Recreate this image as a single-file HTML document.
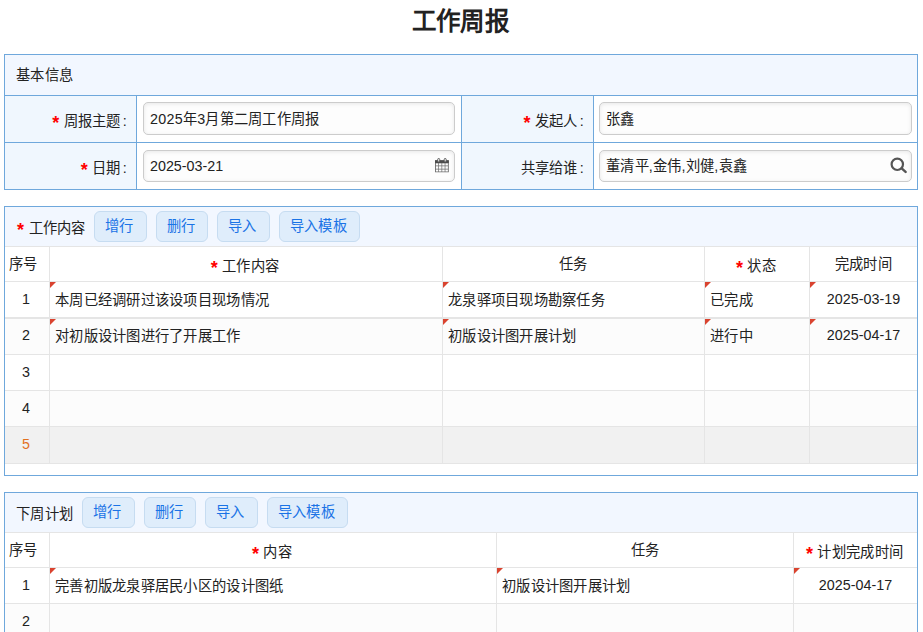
<!DOCTYPE html>
<html lang="zh-CN">
<head>
<meta charset="utf-8">
<title>工作周报</title>
<style>
*{box-sizing:border-box;}
html,body{margin:0;padding:0;}
html{width:923px;height:632px;overflow:hidden;background:#fff;}
body{width:923px;height:632px;overflow:hidden;background:#fff;color:#222;
  font-family:"Liberation Sans",sans-serif;font-size:14.3px;line-height:20px;letter-spacing:.27px;}
h1{margin:0;height:54px;text-align:center;font-size:24.5px;font-weight:bold;line-height:32px;padding:6px 2px 0 0;color:#222;}
.star{color:#f00;font-size:18px;font-weight:bold;line-height:0;vertical-align:-3px;}
/* ---------- panel 1 ---------- */
.p1{margin-left:4px;width:914px;padding:1px;background:#6fa8dc;display:grid;gap:1px;
  grid-template-columns:131px 324px 131px 323px;grid-template-rows:40px 46px 46px;}
.p1 > div{background:#fff;}
.p1 .cap{grid-column:1 / 5;background:#f2f7ff;padding:10px 0 0 11px;}
.p1 .lab{background:#f0f7fe;text-align:right;padding:15px 9px 0 0;white-space:nowrap;}
.p1 .lab i{font-style:normal;margin-left:2px;}
.p1 .fld{padding:6px 0 0 6px;}
.inp{position:relative;width:312px;height:33px;border:1px solid #ccc;border-radius:5px;background:#fdfdfd;
  box-shadow:inset 0 1px 4px rgba(0,0,0,.09);padding:6px 0 0 6px;white-space:nowrap;}
.inp svg{position:absolute;}
.p1 .fld.r{padding-left:5px;}
.p1 .fld.r .inp{width:313px;}
.p1 .fld.b{padding-top:7px;}
.p1 .fld.b .inp{height:32px;padding-top:5px;}
/* ---------- panels 2 / 3 ---------- */
.pn{margin:16px 0 0 4px;width:914px;border:1px solid #6fa8dc;background:#fff;}
.tb{height:39px;background:#f2f7ff;position:relative;}
.tb .ttl{position:absolute;left:11px;top:11px;white-space:nowrap;}
.btn{position:absolute;top:4px;height:31px;border:1px solid #c6dcf1;border-radius:6px;background:#dfedfb;
  color:#1a73e6;text-align:center;line-height:20px;padding:4px 2px 0 0;white-space:nowrap;}
.gr{display:grid;gap:1px;background:#e5e5e5;border-top:1px solid #e5e5e5;border-bottom:1px solid #e5e5e5;}
.gr > div{background:#fff;position:relative;white-space:nowrap;overflow:hidden;}
.g2{grid-template-columns:44px 392px 261px 104px 107px;grid-template-rows:34px 35px 36px 35px 35px 36px;}
.g3{grid-template-columns:44px 446px 296px 123px;grid-template-rows:34px 35px 28px;border-bottom:0;}
.pn.last{border-bottom:0;height:140px;overflow:hidden;}
.gr .h{text-align:center;padding-top:7px;}
.gr .h.s{padding:9px 2px 0 0;}
.gr .h.f{padding-right:7px;}
.gr .n{text-align:center;padding:7px 2px 0 0;}
.gr .c{padding:8px 0 0 5px;}
.gr .d{text-align:center;padding-top:7px;letter-spacing:.05px;}
.ls0{letter-spacing:0;}
.gr .alt{background:#fcfcfc;}
.g2 > div:nth-child(n+11):nth-child(-n+15){border-top:1px solid #e5e5e5;padding-top:7px;}
.g2 > div.n:nth-child(11),.g2 > div.d:nth-child(15){padding-top:6px;}
.gr .sel{background:#f1f1f1;}
.gr .n.sel{color:#e2701e;}
.gr .m:before{content:"";position:absolute;left:0;top:0;border-top:6px solid #d9432f;border-right:6px solid transparent;}
</style>
</head>
<body>
<h1>工作周报</h1>

<div class="p1">
  <div class="cap">基本信息</div>
  <div class="lab"><span class="star">*</span> 周报主题<i>:</i></div>
  <div class="fld"><div class="inp">2025年3月第二周工作周报</div></div>
  <div class="lab"><span class="star">*</span> 发起人<i>:</i></div>
  <div class="fld r"><div class="inp">张鑫</div></div>
  <div class="lab"><span class="star">*</span> 日期<i>:</i></div>
  <div class="fld b"><div class="inp ls0">2025-03-21<svg width="14" height="15" viewBox="0 0 14 15" style="left:291px;top:6.8px"><path fill="#6e6e6e" fill-rule="evenodd" d="M0 2.3h13.8v11.9H0zM0.9 5.2V7.6H3.3V5.2zM4 5.2V7.6H6.5V5.2zM7.2 5.2V7.6H9.7V5.2zM10.4 5.2V7.6H12.9V5.2zM0.9 8.3V10.7H3.3V8.3zM4 8.3V10.7H6.5V8.3zM7.2 8.3V10.7H9.7V8.3zM10.4 8.3V10.7H12.9V8.3zM0.9 11.4V13.5H3.3V11.4zM4 11.4V13.5H6.5V11.4zM7.2 11.4V13.5H9.7V11.4zM10.4 11.4V13.5H12.9V11.4z"/><rect x="0" y="2.3" width="13.8" height="2.8" fill="#4c4c4c"/><rect x="2.7" y="0.45" width="2" height="3.5" rx="1" fill="#eee" stroke="#555" stroke-width="0.9"/><rect x="9.2" y="0.45" width="2" height="3.5" rx="1" fill="#eee" stroke="#555" stroke-width="0.9"/></svg></div></div>
  <div class="lab">共享给谁<i>:</i></div>
  <div class="fld r b"><div class="inp">董清平,金伟,刘健,袁鑫<svg width="18" height="18" viewBox="0 0 18 18" style="left:289px;top:5.2px"><circle cx="8.3" cy="8.3" r="5.7" fill="none" stroke="#555" stroke-width="2.2"/><path d="M12.7 12.4l3.9 3.5" stroke="#555" stroke-width="2.4" stroke-linecap="round" fill="none"/></svg></div></div>
</div>

<div class="pn">
  <div class="tb">
    <div class="ttl" style="left:12px"><span class="star">*</span> 工作内容</div>
    <div class="btn" style="left:89px;width:53px;">增行</div>
    <div class="btn" style="left:151px;width:52px;">删行</div>
    <div class="btn" style="left:212px;width:53px;">导入</div>
    <div class="btn" style="left:274px;width:81px;">导入模板</div>
  </div>
  <div class="gr g2">
    <div class="h f">序号</div>
    <div class="h s"><span class="star">*</span> 工作内容</div>
    <div class="h">任务</div>
    <div class="h s"><span class="star">*</span> 状态</div>
    <div class="h">完成时间</div>

    <div class="n">1</div>
    <div class="c m">本周已经调研过该设项目现场情况</div>
    <div class="c m">龙泉驿项目现场勘察任务</div>
    <div class="c m">已完成</div>
    <div class="d m">2025-03-19</div>

    <div class="n alt">2</div>
    <div class="c m alt">对初版设计图进行了开展工作</div>
    <div class="c m alt">初版设计图开展计划</div>
    <div class="c m alt">进行中</div>
    <div class="d m alt">2025-04-17</div>

    <div class="n">3</div><div class="c"></div><div class="c"></div><div class="c"></div><div class="d"></div>
    <div class="n alt">4</div><div class="c alt"></div><div class="c alt"></div><div class="c alt"></div><div class="d alt"></div>
    <div class="n sel">5</div><div class="c sel"></div><div class="c sel"></div><div class="c sel"></div><div class="d sel"></div>
  </div>
  <div style="height:11px"></div>
</div>

<div class="pn last">
  <div class="tb">
    <div class="ttl">下周计划</div>
    <div class="btn" style="left:77px;width:53px;">增行</div>
    <div class="btn" style="left:139px;width:52px;">删行</div>
    <div class="btn" style="left:200px;width:53px;">导入</div>
    <div class="btn" style="left:262px;width:81px;">导入模板</div>
  </div>
  <div class="gr g3">
    <div class="h f">序号</div>
    <div class="h s"><span class="star">*</span> 内容</div>
    <div class="h">任务</div>
    <div class="h s"><span class="star">*</span> 计划完成时间</div>

    <div class="n">1</div>
    <div class="c m">完善初版龙泉驿居民小区的设计图纸</div>
    <div class="c m">初版设计图开展计划</div>
    <div class="d m">2025-04-17</div>

    <div class="n alt">2</div><div class="c alt"></div><div class="c alt"></div><div class="d alt"></div>
  </div>
</div>
</body>
</html>
